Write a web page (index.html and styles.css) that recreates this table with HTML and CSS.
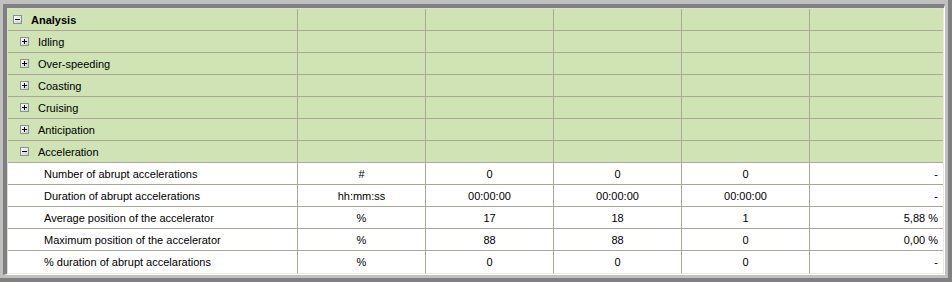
FILE: index.html
```html
<!DOCTYPE html>
<html>
<head>
<meta charset="utf-8">
<link rel="stylesheet" href="styles.css">
</head>
<body>
<div class="window">
  <div class="sunken">
    <div class="grid">
      <div class="row group">
        <div class="cell name lvl0"><svg class="tog" width="9" height="9" viewBox="0 0 9 9"><rect x="0.5" y="0.5" width="8" height="8" fill="url(#g)" stroke="#8a8f94"/><path d="M2 4.5h5" stroke="#000"/><defs><linearGradient id="g" x1="0" y1="0" x2="1" y2="1"><stop offset="0" stop-color="#ffffff"/><stop offset="1" stop-color="#c8cdd2"/></linearGradient></defs></svg><b>Analysis</b></div>
        <div class="cell"></div><div class="cell"></div><div class="cell"></div><div class="cell"></div><div class="cell last"></div>
      </div>
      <div class="row group">
        <div class="cell name lvl1"><svg class="tog" width="9" height="9" viewBox="0 0 9 9"><rect x="0.5" y="0.5" width="8" height="8" fill="url(#g)" stroke="#8a8f94"/><path d="M2 4.5h5M4.5 2v5" stroke="#000"/></svg>Idling</div>
        <div class="cell"></div><div class="cell"></div><div class="cell"></div><div class="cell"></div><div class="cell last"></div>
      </div>
      <div class="row group">
        <div class="cell name lvl1"><svg class="tog" width="9" height="9" viewBox="0 0 9 9"><rect x="0.5" y="0.5" width="8" height="8" fill="url(#g)" stroke="#8a8f94"/><path d="M2 4.5h5M4.5 2v5" stroke="#000"/></svg>Over-speeding</div>
        <div class="cell"></div><div class="cell"></div><div class="cell"></div><div class="cell"></div><div class="cell last"></div>
      </div>
      <div class="row group">
        <div class="cell name lvl1"><svg class="tog" width="9" height="9" viewBox="0 0 9 9"><rect x="0.5" y="0.5" width="8" height="8" fill="url(#g)" stroke="#8a8f94"/><path d="M2 4.5h5M4.5 2v5" stroke="#000"/></svg>Coasting</div>
        <div class="cell"></div><div class="cell"></div><div class="cell"></div><div class="cell"></div><div class="cell last"></div>
      </div>
      <div class="row group">
        <div class="cell name lvl1"><svg class="tog" width="9" height="9" viewBox="0 0 9 9"><rect x="0.5" y="0.5" width="8" height="8" fill="url(#g)" stroke="#8a8f94"/><path d="M2 4.5h5M4.5 2v5" stroke="#000"/></svg>Cruising</div>
        <div class="cell"></div><div class="cell"></div><div class="cell"></div><div class="cell"></div><div class="cell last"></div>
      </div>
      <div class="row group">
        <div class="cell name lvl1"><svg class="tog" width="9" height="9" viewBox="0 0 9 9"><rect x="0.5" y="0.5" width="8" height="8" fill="url(#g)" stroke="#8a8f94"/><path d="M2 4.5h5M4.5 2v5" stroke="#000"/></svg>Anticipation</div>
        <div class="cell"></div><div class="cell"></div><div class="cell"></div><div class="cell"></div><div class="cell last"></div>
      </div>
      <div class="row group">
        <div class="cell name lvl1"><svg class="tog" width="9" height="9" viewBox="0 0 9 9"><rect x="0.5" y="0.5" width="8" height="8" fill="url(#g)" stroke="#8a8f94"/><path d="M2 4.5h5" stroke="#000"/></svg>Acceleration</div>
        <div class="cell"></div><div class="cell"></div><div class="cell"></div><div class="cell"></div><div class="cell last"></div>
      </div>
      <div class="row leaf">
        <div class="cell name lvl2">Number of abrupt accelerations</div>
        <div class="cell c">#</div><div class="cell c">0</div><div class="cell c">0</div><div class="cell c">0</div><div class="cell last r">-</div>
      </div>
      <div class="row leaf">
        <div class="cell name lvl2">Duration of abrupt accelerations</div>
        <div class="cell c">hh:mm:ss</div><div class="cell c">00:00:00</div><div class="cell c">00:00:00</div><div class="cell c">00:00:00</div><div class="cell last r">-</div>
      </div>
      <div class="row leaf">
        <div class="cell name lvl2">Average position of the accelerator</div>
        <div class="cell c">%</div><div class="cell c">17</div><div class="cell c">18</div><div class="cell c">1</div><div class="cell last r">5,88 %</div>
      </div>
      <div class="row leaf">
        <div class="cell name lvl2">Maximum position of the accelerator</div>
        <div class="cell c">%</div><div class="cell c">88</div><div class="cell c">88</div><div class="cell c">0</div><div class="cell last r">0,00 %</div>
      </div>
      <div class="row leaf final">
        <div class="cell name lvl2">% duration of abrupt accelarations</div>
        <div class="cell c">%</div><div class="cell c">0</div><div class="cell c">0</div><div class="cell c">0</div><div class="cell last r">-</div>
      </div>
    </div>
  </div>
</div>
</body>
</html>
```
FILE: styles.css
```css
html, body {
  margin: 0;
  padding: 0;
  background: #c0c0c0;
}
.window {
  width: 952px;
  height: 282px;
  box-sizing: border-box;
  background: #c0c0c0;
  padding: 4px 3px 3px 3px;
  border-right: 4px solid #808080;
  border-bottom: 4px solid #808080;
  font-family: "Liberation Sans", Arial, sans-serif;
  font-size: 11px;
  color: #000;
}
.sunken {
  border-top: 4px solid #808080;
  border-left: 4px solid #808080;
  border-right: 1px solid #ffffff;
  border-bottom: 1px solid #ffffff;
}
.grid {
  border-top: 1px solid #dcdcd4;
  border-left: 1px solid #dcdcd4;
  border-right: 1px solid #ece9d8;
  border-bottom: 1px solid #ece9d8;
  background: #ffffff;
}
.row {
  display: grid;
  grid-template-columns: 290px 128px 128px 128px 128px 133px;
  height: 22px;
  box-sizing: border-box;
  border-bottom: 1px solid #aca899;
}
.row.final {
  border-bottom: none;
}
.group {
  background: #cfe3b5;
}
.leaf {
  background: #ffffff;
}
.cell {
  box-sizing: border-box;
  border-right: 1px solid #aca899;
  display: flex;
  align-items: center;
  white-space: nowrap;
  overflow: hidden;
}
.cell.last {
  border-right: none;
}
.cell.c {
  justify-content: center;
}
.cell.r {
  justify-content: flex-end;
  padding-right: 5px;
}
.name.lvl0 {
  padding-left: 5px;
}
.name.lvl1 {
  padding-left: 12px;
}
.name.lvl2 {
  padding-left: 36px;
}
.tog {
  flex: none;
  margin-right: 9px;
}
b {
  font-weight: bold;
}
```
